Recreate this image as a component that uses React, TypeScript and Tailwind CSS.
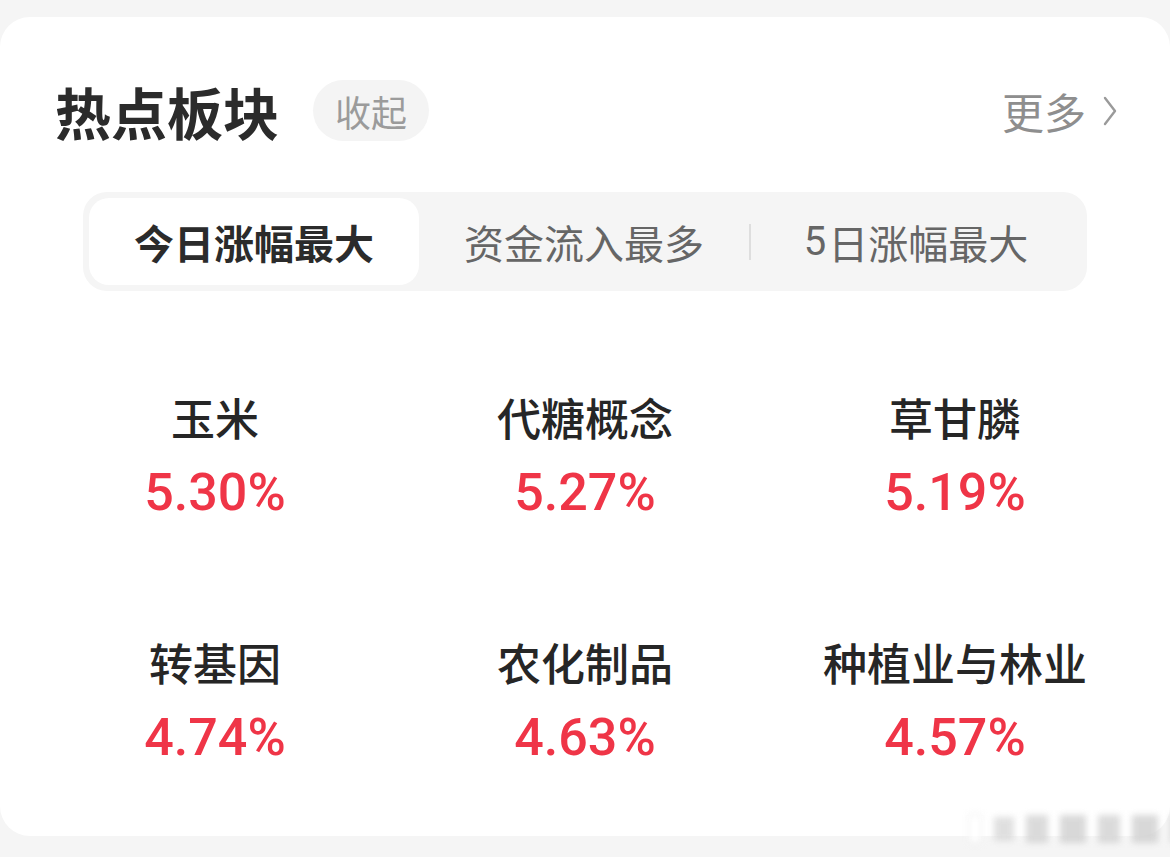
import React from "react";

const CJK = "font-['Noto_Sans_CJK_SC',sans-serif]";

type Sector = { name: string; pct: string };

const sectors: Sector[] = [
  { name: "玉米", pct: "5.30%" },
  { name: "代糖概念", pct: "5.27%" },
  { name: "草甘膦", pct: "5.19%" },
  { name: "转基因", pct: "4.74%" },
  { name: "农化制品", pct: "4.63%" },
  { name: "种植业与林业", pct: "4.57%" },
];

function Chevron() {
  return (
    <svg width="16" height="32" viewBox="0 0 16 32" fill="none">
      <path d="M3 3 L13 16 L3 29" stroke="#9a9a9a" strokeWidth="2.4" strokeLinecap="round" strokeLinejoin="round" />
    </svg>
  );
}

export default function App() {
  return (
    <div className={`w-[1170px] h-[857px] bg-[#f5f5f5] pt-[17px] overflow-hidden relative ${CJK}`}>
      <div className="bg-white rounded-[30px] h-[819px] pt-[63px]">
        {/* header */}
        <div className="flex items-center justify-between pl-[55px] pr-[52px] h-[61px]">
          <div className="flex items-center">
            <h1 className="text-[56px] leading-none font-bold text-[#2b2b2b]">热点板块</h1>
            <span className="ml-[34px] h-[61px] px-[22px] rounded-full bg-[#f4f4f4] text-[#9b9b9b] text-[36px] flex items-center">
              收起
            </span>
          </div>
          <div className="flex items-center gap-[16px] text-[42px] text-[#8e8e8e]">
            <span className="leading-none">更多</span>
            <Chevron />
          </div>
        </div>

        {/* tabs */}
        <div className="mx-[83px] mt-[51px] h-[99px] rounded-[24px] bg-[#f5f5f5] p-[6px] flex items-center">
          <div className="flex-1 h-full rounded-[20px] bg-white flex items-center justify-center text-[40px] font-bold text-[#2b2b2b]">
            今日涨幅最大
          </div>
          <div className="flex-1 h-full flex items-center justify-center text-[40px] text-[#666666]">
            资金流入最多
          </div>
          <div className="w-[2px] h-[36px] bg-[#dedede]" />
          <div className="flex-1 h-full flex items-center justify-center text-[40px] text-[#666666]">
            <span className="font-['Roboto',sans-serif] mr-[2px]">5</span>日涨幅最大
          </div>
        </div>

        {/* grid */}
        <div className="grid grid-cols-3 px-[30px] mt-[100px] gap-y-[117px]">
          {sectors.map((s) => (
            <div key={s.name} className="flex flex-col items-center">
              <div className="text-[44px] leading-[52px] font-medium text-[#262626]">{s.name}</div>
              <div className="mt-[24px] text-[52px] leading-[52px] font-medium text-[#ef3547] font-['Roboto',sans-serif]">
                {s.pct}
              </div>
            </div>
          ))}
        </div>
      </div>

      {/* blurred watermark */}
      <div className="absolute left-[968px] top-[814px] flex items-center gap-[12px] blur-[3px] opacity-80">
        <div className="w-[14px] h-[30px] bg-white border border-[#e2e2e2]" />
        <div className="w-[20px] h-[24px] bg-[#d8d8d8]" />
        <div className="w-[22px] h-[28px] bg-[#d2d2d2]" />
        <div className="w-[26px] h-[28px] bg-[#cfcfcf]" />
        <div className="w-[22px] h-[28px] bg-[#d2d2d2]" />
        <div className="w-[26px] h-[28px] bg-[#cfcfcf]" />
        <div className="w-[24px] h-[28px] bg-[#d6d6d6]" />
      </div>
    </div>
  );
}
